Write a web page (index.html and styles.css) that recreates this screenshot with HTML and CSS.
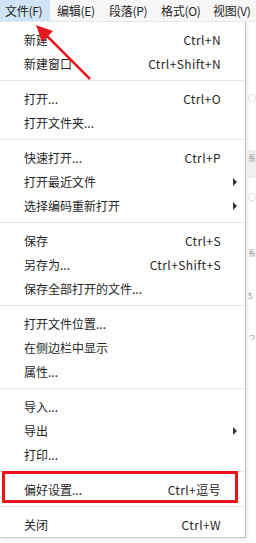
FILE: index.html
```
<!DOCTYPE html>
<html>
<head>
<meta charset="utf-8" />
<title>文件菜单</title>
<link rel="stylesheet" href="styles.css">
</head>
<body>
<div class="screen">
    <div class="menubar">
        <span class="bar-item active">文件(F)</span>
        <span class="bar-item">编辑(E)</span>
        <span class="bar-item">段落(P)</span>
        <span class="bar-item">格式(O)</span>
        <span class="bar-item">视图(V)</span>
    </div>
    <div class="below">
        <div class="menu">
            <div class="item"><span>新建</span><span class="key">Ctrl+N</span></div>
            <div class="item"><span>新建窗口</span><span class="key">Ctrl+Shift+N</span></div>
            <div class="sep"></div>
            <div class="item"><span>打开...</span><span class="key">Ctrl+O</span></div>
            <div class="item"><span>打开文件夹...</span></div>
            <div class="sep"></div>
            <div class="item"><span>快速打开...</span><span class="key">Ctrl+P</span></div>
            <div class="item"><span>打开最近文件</span><span></span><i class="arrow"></i></div>
            <div class="item"><span>选择编码重新打开</span><span></span><i class="arrow"></i></div>
            <div class="sep"></div>
            <div class="item"><span>保存</span><span class="key">Ctrl+S</span></div>
            <div class="item"><span>另存为...</span><span class="key">Ctrl+Shift+S</span></div>
            <div class="item"><span>保存全部打开的文件...</span></div>
            <div class="sep"></div>
            <div class="item"><span>打开文件位置...</span></div>
            <div class="item"><span>在侧边栏中显示</span></div>
            <div class="item"><span>属性...</span></div>
            <div class="sep"></div>
            <div class="item"><span>导入...</span></div>
            <div class="item"><span>导出</span><span></span><i class="arrow"></i></div>
            <div class="item"><span>打印...</span></div>
            <div class="sep"></div>
            <div class="item"><span>偏好设置...</span><span class="key">Ctrl+逗号</span></div>
            <div class="sep"></div>
            <div class="item"><span>关闭</span><span class="key">Ctrl+W</span></div>
        </div>
        <div class="behind">
            <span class="frag f1">○</span>
            <div class="shade"></div>
            <span class="frag f2">系</span>
            <span class="frag f3">○</span>
            <span class="frag f4">系</span>
            <span class="frag f5">5</span>
            <span class="frag f6">っ</span>
        </div>
    </div>

    <div class="mark-box"></div>
    <svg class="mark-arrow" width="100" height="90" viewBox="0 0 100 90">
        <line x1="90" y1="79" x2="45" y2="34" stroke="#e3191f" stroke-width="2.5" />
        <polygon points="36,25 53,31 42,42" fill="#e3191f" />
    </svg>
</div>
</body>
</html>
```

FILE: styles.css
```
body {margin:0; background:#fff;}
.screen {position:relative; width:256px; height:543px; overflow:hidden; background:#fff; font-family:"Noto Sans CJK SC", "Microsoft YaHei", sans-serif; font-size:12px; color:#262626;}

.menubar {display:flex; height:21px; background:#f7f7f7; border-bottom:1px solid #e8e8e8;}
.bar-item {flex:none; width:45px; padding-left:5px; margin-right:2px; line-height:21px; white-space:nowrap; letter-spacing:-0.3px;}
.bar-item.active {background:#cfe4f7;}

.below {display:flex;}
.menu {width:245px; border-right:1px solid #bdbdbd; border-bottom:1px solid #c8c8c8; padding:5px 0 1px; background:#fff; box-shadow:2px 2px 3px rgba(0,0,0,0.08);}
.item {display:grid; grid-template-columns:1fr auto 24px; align-items:center; height:24px; padding-left:24px; white-space:nowrap;}
.key {letter-spacing:0.4px;}
.arrow {width:0; height:0; margin:2px 0 0 12px; border-top:4px solid transparent; border-bottom:4px solid transparent; border-left:4px solid #333;}
.sep {height:11px; display:flex; align-items:center;}
.sep::after {content:""; display:block; width:100%; height:1px; background:#e3e3e3;}

.behind {position:relative; flex:1; color:#9a9a9a;}
.frag {position:absolute; left:2px; font-size:8px; line-height:10px;}
.f1 {top:71px;}
.shade {position:absolute; left:1px; right:0; top:128px; height:28px; background:#efefef;}
.f2 {top:131px;}
.f3 {top:170px;}
.f4 {top:226px;}
.f5 {top:269px;}
.f6 {top:309px;}

.mark-box {position:absolute; left:2px; top:471px; width:230px; height:26px; border:3px solid #e8141b;}
.mark-arrow {position:absolute; left:0; top:0;}
```
